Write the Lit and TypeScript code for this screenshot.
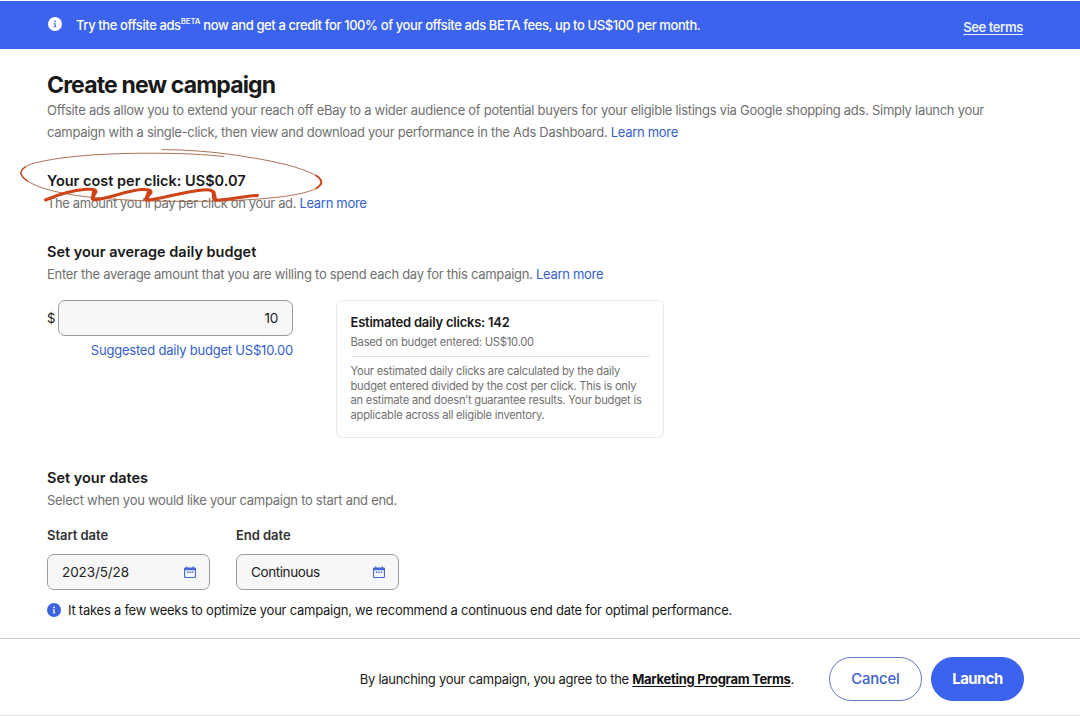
import { LitElement, html, css, svg } from "lit";
import { customElement, property } from "lit/decorators.js";

@customElement("info-icon")
class InfoIcon extends LitElement {
  static styles = css`
    :host { display: block; width: 14px; height: 14px; }
    svg { display: block; }
    .disc { fill: currentColor; }
    .mark { fill: var(--mark, #fff); }
  `;
  render() {
    return html`<svg width="14" height="14" viewBox="0 0 14 14">
      <circle class="disc" cx="7" cy="7" r="7" />
      <circle class="mark" cx="7" cy="4.300" r="0.900" />
      <path class="mark" d="M5.700 6.200H7.700V9.400H8.300V10.300H5.700V9.400H6.400V7.100H5.700Z" />
    </svg>`;
  }
}

@customElement("date-field")
class DateField extends LitElement {
  @property() label = "";
  @property() value = "";
  static styles = css`
    :host { display: block; width: 163px; }
    .label { font-weight: 600; font-size: 13px; line-height: 20px; letter-spacing: -0.05px; color: #333; }
    .box {
      box-sizing: border-box; height: 36px; margin-top: 9px; padding: 0 13px 0 14px;
      display: flex; align-items: center; justify-content: space-between;
      border: 1px solid #9a9aa0; border-radius: 7px; background: #f7f7f7;
      font-size: 13.5px; letter-spacing: var(--value-ls, -0.1px); color: #222;
    }
    svg { display: block; }
  `;
  render() {
    return html`
      <div class="label">${this.label}</div>
      <div class="box">
        <span>${this.value}</span>
        <svg width="12" height="13" viewBox="0 0 12 13">
          <path fill="#4468d8" fill-rule="evenodd" d="M2 0.600H3.400V1.400H8.600V0.600H10V1.400H10.800Q12 1.400 12 2.600V10.800Q12 12 10.800 12H1.200Q0 12 0 10.800V2.600Q0 1.400 1.200 1.400H2ZM1.100 4.300V10.300Q1.100 10.900 1.700 10.900H10.300Q10.900 10.900 10.900 10.300V4.300Z" />
          <path fill="#4468d8" d="M2.900 5.400H4.400V6.900H2.900ZM5.300 5.400H6.800V6.900H5.300ZM7.700 5.400H9.200V6.900H7.700Z" />
        </svg>
      </div>`;
  }
}

const scribble = svg`
  <g fill="none" stroke-linecap="round" stroke-linejoin="round">
    <path d="M162 149.600C195 149.800 225 153 250 157.500C280 162 303 168.500 315 175C324 180 323.500 184.500 317 188C306 194 282 198 240 200.200C190 202.500 130 201.500 88 197C58 193.500 40 188 30 182.500C17 175 18 168 34 163.200C62 156 105 153.200 150 153.200C180 153.200 205 154.300 224 156.600" stroke="#a5613f" stroke-width="0.900" />
    <path d="M27.500 181C20 176 18.500 171 25.500 166.800" stroke="#c54a22" stroke-width="1.400" />
    <path d="M316 175.500C323 180 322.800 184.200 316.500 188.200" stroke="#cc4520" stroke-width="1.900" />
    <path d="M45.500 200C57 195 70 190.600 86 189.300C95 188.700 97.500 190.200 95 193.500C93 196.500 91.500 199 93.500 199.800C107 199 125 191.200 141 189.600C150 188.900 153 191 150 194C147 197 144.500 199.500 146.500 200.200C163 199 180 191.800 203 189.900C211 189.300 214.500 191 213.500 194.500C213 197.500 213 199.500 216 200.200C229 200 243 196.300 257.500 195.400" stroke="#cf4317" stroke-width="3" />
    <path d="M94 191.500L92.800 198.500M149 192L146.500 198.800M213.500 192.500L215 199" stroke="#cf4317" stroke-width="4" />
  </g>`;

@customElement("app-root")
class AppRoot extends LitElement {
  static styles = css`
    :host {
      display: flex; flex-direction: column; box-sizing: border-box;
      width: 1080px; height: 716px; overflow: hidden; position: relative;
      background: #fff; color: #191919; padding-top: 1px;
      font-family: Inter, "Liberation Sans", sans-serif; font-size: 13px; white-space: nowrap;
    }
    .banner {
      box-sizing: border-box; height: 48px; padding: 0 57px 0 48px; background: #3b63ee; color: #fff;
      display: flex; align-items: center;
    }
    .banner info-icon { --mark: #3b63ee; margin: -3px 14px 0 0; }
    .offer { flex: 1; letter-spacing: -0.4px; font-weight: 500; line-height: 20px; }
    .offer sup { font-size: 8px; line-height: 0; vertical-align: 6px; letter-spacing: -0.2px; }
    .terms { color: #e9f0ff; text-decoration: underline; font-weight: 600; letter-spacing: -0.4px; margin-top: 3px; text-underline-offset: 2px; }
    main { flex: none; box-sizing: border-box; height: 589px; padding: 22px 47px 0; }
    h1, h2, p { margin: 0; }
    h1 { font-size: 23px; line-height: 28px; font-weight: 700; letter-spacing: -0.85px; }
    h2 { font-size: 14.5px; line-height: 22px; font-weight: 600; letter-spacing: 0; }
    p { color: #707070; font-size: 13px; line-height: 22px; letter-spacing: -0.28px; }
    .blue { color: #3460cc; letter-spacing: -0.3px; }
    .cost { margin-top: 27px; }
    .cost p { letter-spacing: -0.36px; }
    .budget { margin-top: 27px; }
    .row { display: flex; margin-top: 15px; }
    .amount { width: 246px; }
    .entry { display: flex; align-items: center; gap: 3px; }
    .dollar { width: 8px; font-size: 13px; }
    .input {
      box-sizing: border-box; width: 235px; height: 36px; padding-right: 14px;
      border: 1px solid #9a9aa0; border-radius: 7px; background: #f7f7f7;
      display: flex; align-items: center; justify-content: flex-end; font-size: 13.5px; letter-spacing: -0.2px;
    }
    .suggested { color: #3460cc; text-align: right; margin-top: 4px; line-height: 20px; letter-spacing: -0.21px; }
    .card {
      box-sizing: border-box; width: 328px; height: 138px; margin-left: 43px; padding: 11px 13px 0 13.5px;
      border: 1px solid #e9e9e9; border-radius: 6px;
    }
    .card h2 { font-size: 13px; line-height: 20px; letter-spacing: -0.23px; }
    .card p { font-size: 11.2px; line-height: 14.6px; letter-spacing: -0.23px; }
    .card .based { line-height: 21px; padding-bottom: 3px; border-bottom: 1px solid #e2e2e2; margin-bottom: 7px; }
    .dates { margin-top: 29px; }
    .fields { display: flex; gap: 26px; margin-top: 14px; }
    .end { --value-ls: -0.4px; }
    .note { display: flex; align-items: center; gap: 7px; margin-top: 10px; line-height: 20px; letter-spacing: -0.245px; }
    .note info-icon { color: #3b63e0; }
    footer {
      box-sizing: border-box; height: 78px; padding: 3px 56px 0 0;
      border-top: 1px solid #cfcfcf; border-bottom: 1px solid #dedede;
      display: flex; align-items: center; justify-content: flex-end;
    }
    .agree { letter-spacing: -0.29px; margin-right: 35px; }
    .agree b { font-weight: 700; text-decoration: underline; text-underline-offset: 2px; color: #111; }
    .btn {
      box-sizing: border-box; width: 93px; height: 44px; border-radius: 22px; border: 1px solid #6079c4;
      display: flex; align-items: center; justify-content: center; font-size: 14.8px; font-weight: 500; color: #3a60cc;
      letter-spacing: -0.1px;
    }
    .launch { margin-left: 9px; background: #3b63ee; border-color: #3b63ee; color: #fff; font-weight: 700; letter-spacing: -0.5px; }
    .ink { position: absolute; left: 0; top: 0; pointer-events: none; }
  `;

  render() {
    return html`
      <div class="banner">
        <info-icon></info-icon>
        <span class="offer">Try the offsite ads<sup>BETA</sup> now and get a credit for 100% of your offsite ads BETA fees, up to US$100 per month.</span>
        <span class="terms">See terms</span>
      </div>
      <main>
        <h1>Create new campaign</h1>
        <p>Offsite ads allow you to extend your reach off eBay to a wider audience of potential buyers for your eligible listings via Google shopping ads. Simply launch your</p>
        <p>campaign with a single-click, then view and download your performance in the Ads Dashboard. <span class="blue">Learn more</span></p>
        <section class="cost">
          <h2>Your cost per click: US$0.07</h2>
          <p>The amount you’ll pay per click on your ad. <span class="blue">Learn more</span></p>
        </section>
        <section class="budget">
          <h2>Set your average daily budget</h2>
          <p>Enter the average amount that you are willing to spend each day for this campaign. <span class="blue">Learn more</span></p>
          <div class="row">
            <div class="amount">
              <div class="entry"><span class="dollar">$</span><div class="input">10</div></div>
              <div class="suggested">Suggested daily budget US$10.00</div>
            </div>
            <div class="card">
              <h2>Estimated daily clicks: 142</h2>
              <p class="based">Based on budget entered: US$10.00</p>
              <p>Your estimated daily clicks are calculated by the daily<br />budget entered divided by the cost per click. This is only<br />an estimate and doesn’t guarantee results. Your budget is<br />applicable across all eligible inventory.</p>
            </div>
          </div>
        </section>
        <section class="dates">
          <h2>Set your dates</h2>
          <p>Select when you would like your campaign to start and end.</p>
          <div class="fields">
            <date-field label="Start date" value="2023/5/28"></date-field>
            <date-field class="end" label="End date" value="Continuous"></date-field>
          </div>
          <div class="note"><info-icon></info-icon><span>It takes a few weeks to optimize your campaign, we recommend a continuous end date for optimal performance.</span></div>
        </section>
      </main>
      <footer>
        <span class="agree">By launching your campaign, you agree to the <b>Marketing Program Terms</b>.</span>
        <div class="btn">Cancel</div>
        <div class="btn launch">Launch</div>
      </footer>
      <svg class="ink" width="340" height="215" viewBox="0 0 340 215">${scribble}</svg>
    `;
  }
}
